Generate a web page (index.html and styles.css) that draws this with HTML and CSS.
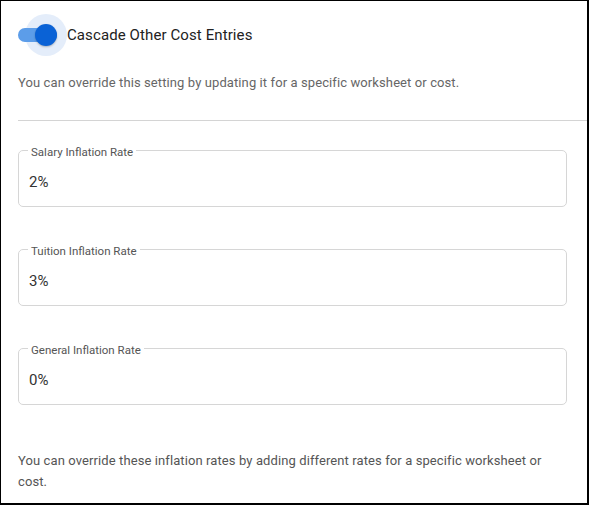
FILE: index.html
```html
<html>
    <head>
        <link rel="stylesheet" href="styles.css">
    </head>
    <body>
        <div class="panel">

            <div class="toggle-row">
                <span class="switch">
                    <span class="halo"></span>
                    <span class="track"></span>
                    <span class="knob"></span>
                </span>
                <span class="toggle-label">Cascade Other Cost Entries</span>
            </div>

            <p class="hint">You can override this setting by updating it for a specific worksheet or cost.</p>

            <hr class="divider">

            <fieldset class="field">
                <legend>Salary Inflation Rate</legend>
                <div class="value">2%</div>
            </fieldset>

            <fieldset class="field">
                <legend>Tuition Inflation Rate</legend>
                <div class="value">3%</div>
            </fieldset>

            <fieldset class="field">
                <legend>General Inflation Rate</legend>
                <div class="value">0%</div>
            </fieldset>

            <p class="note">You can override these inflation rates by adding different rates for a specific worksheet or cost.</p>

        </div>
    </body>
</html>
```

FILE: styles.css
```css
body {
    margin: 0;
    font-family: Roboto, "Liberation Sans", sans-serif;
    background: white;
}

.panel {
    width: 589px;
    height: 505px;
    box-sizing: border-box;
    border-style: solid;
    border-color: black;
    border-width: 1px 2px 2px 1px;
    padding-left: 17px;
    overflow: hidden;
}

.toggle-row {
    height: 68px;
    display: flex;
    align-items: center;
}

.switch {
    position: relative;
    flex: none;
    width: 40px;
    height: 22px;
    margin-right: 9px;
}

.track {
    position: absolute;
    left: 0;
    top: 4px;
    width: 39px;
    height: 14px;
    border-radius: 7px;
    background: #5c9de9;
}

.halo {
    position: absolute;
    left: 7px;
    top: -10px;
    width: 42px;
    height: 42px;
    border-radius: 50%;
    background: #e4edfa;
}

.knob {
    position: absolute;
    left: 17px;
    top: 0;
    width: 22px;
    height: 22px;
    border-radius: 50%;
    background: #0a62d6;
    box-shadow: 0 1px 2px rgba(0, 0, 0, 0.25);
}

.toggle-label {
    font-size: 15px;
    letter-spacing: 0.1px;
    color: #222;
}

.hint {
    margin: 4px 0 0 0;
    font-size: 13px;
    letter-spacing: 0.1px;
    line-height: 20px;
    color: #666;
}

.divider {
    margin: 27px 0 0 0;
    border: 0;
    border-top: 1px solid #d4d4d4;
    height: 0;
}

.field {
    margin: 20px 20px 0 0;
    padding: 0 10px;
    border: 1px solid #d6d6d6;
    border-radius: 5px;
    height: 66px;
    box-sizing: border-box;
}

.field + .field {
    margin-top: 33px;
}

.field legend {
    padding: 4px 3px 0 3px;
    margin-left: -1px;
    font-size: 11.5px;
    line-height: 14px;
    color: #555;
}

.value {
    margin-top: 13px;
    font-size: 15px;
    line-height: 20px;
    color: #333;
}

.note {
    margin: 45px 20px 0 0;
    font-size: 13px;
    letter-spacing: 0.1px;
    line-height: 21px;
    color: #555;
}
```
